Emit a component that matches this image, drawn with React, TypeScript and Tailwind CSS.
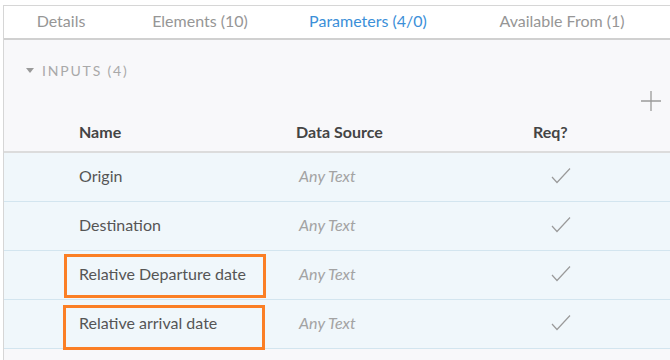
import React from 'react';

const tabs = [
    { label: 'Details', width: 'w-[114px]' },
    { label: 'Elements (10)', width: 'w-[164px]' },
    { label: 'Parameters (4/0)', width: 'w-[172px]', active: true },
    { label: 'Available From (1)', width: 'w-[216px]' },
];

const inputs = [
    { name: 'Origin' },
    { name: 'Destination' },
    { name: 'Relative Departure date', mark: 'left-[60px] top-[3px] w-[202px] h-[44px]' },
    { name: 'Relative arrival date', mark: 'left-[59px] top-[5px] w-[202px] h-[45px]' },
];

const Check = () => (
    <svg width="20" height="17" viewBox="0 0 20 17" fill="none" stroke="#9a9a9a" strokeWidth="1.2">
        <path d="M1 10l5 5.5L19 1.5" />
    </svg>
);

export default function App() {
    return (
        <div className="w-[670px] h-[360px] bg-white pt-[5px] overflow-hidden" style={{ fontFamily: 'Lato, "Open Sans", sans-serif' }}>
            <div className="ml-[3px] h-full border-l border-t border-[#d6d6d6] bg-[#f8f8fa]">
                {/* tabs */}
                <div className="flex h-[34px] bg-white border-b-2 border-[#d0d0d0] text-[16px]">
                    {tabs.map((t) => (
                        <div
                            key={t.label}
                            className={`${t.width} shrink-0 flex items-center justify-center pb-[3px] ${t.active ? 'text-[#3b8fd8]' : 'text-[#969696]'}`}
                        >
                            {t.label}
                        </div>
                    ))}
                </div>

                {/* section title */}
                <div className="flex items-center pl-[22px] pt-[20px] h-[41px] text-[14px] tracking-[0.13em] text-[#a9a9a9]">
                    <svg width="8" height="5" viewBox="0 0 8 5" className="mr-[8px]">
                        <path d="M0 0h8L4 5z" fill="#9a9a9a" />
                    </svg>
                    INPUTS (4)
                </div>

                <div className="flex justify-end pr-[9px] pt-[10px] h-[31px]">
                    <svg width="20" height="20" viewBox="0 0 20 20" stroke="#9a9a9a" strokeWidth="1.3">
                        <path d="M10 0v20M0 10h20" />
                    </svg>
                </div>

                {/* header */}
                <div className="flex items-center h-[41px] border-b-2 border-[#dcdcdc] text-[16px] font-bold text-[#444]">
                    <div className="w-[292px] pl-[75px]">Name</div>
                    <div className="w-[237px]">Data Source</div>
                    <div>Req?</div>
                </div>

                {/* rows */}
                {inputs.map((r) => (
                    <div key={r.name} className="relative flex items-center h-[49px] pb-[3px] bg-[#f0f7fb] border-b border-[#d3e5ef] text-[16px] text-[#555]">
                        <div className="w-[295px] pl-[75px]">{r.name}</div>
                        <div className="w-[252px] italic text-[#a3a3a3]">Any Text</div>
                        <Check />
                        {r.mark && <div className={`absolute ${r.mark} border-[3px] border-[#fb7f25]`} />}
                    </div>
                ))}
            </div>
        </div>
    );
}
